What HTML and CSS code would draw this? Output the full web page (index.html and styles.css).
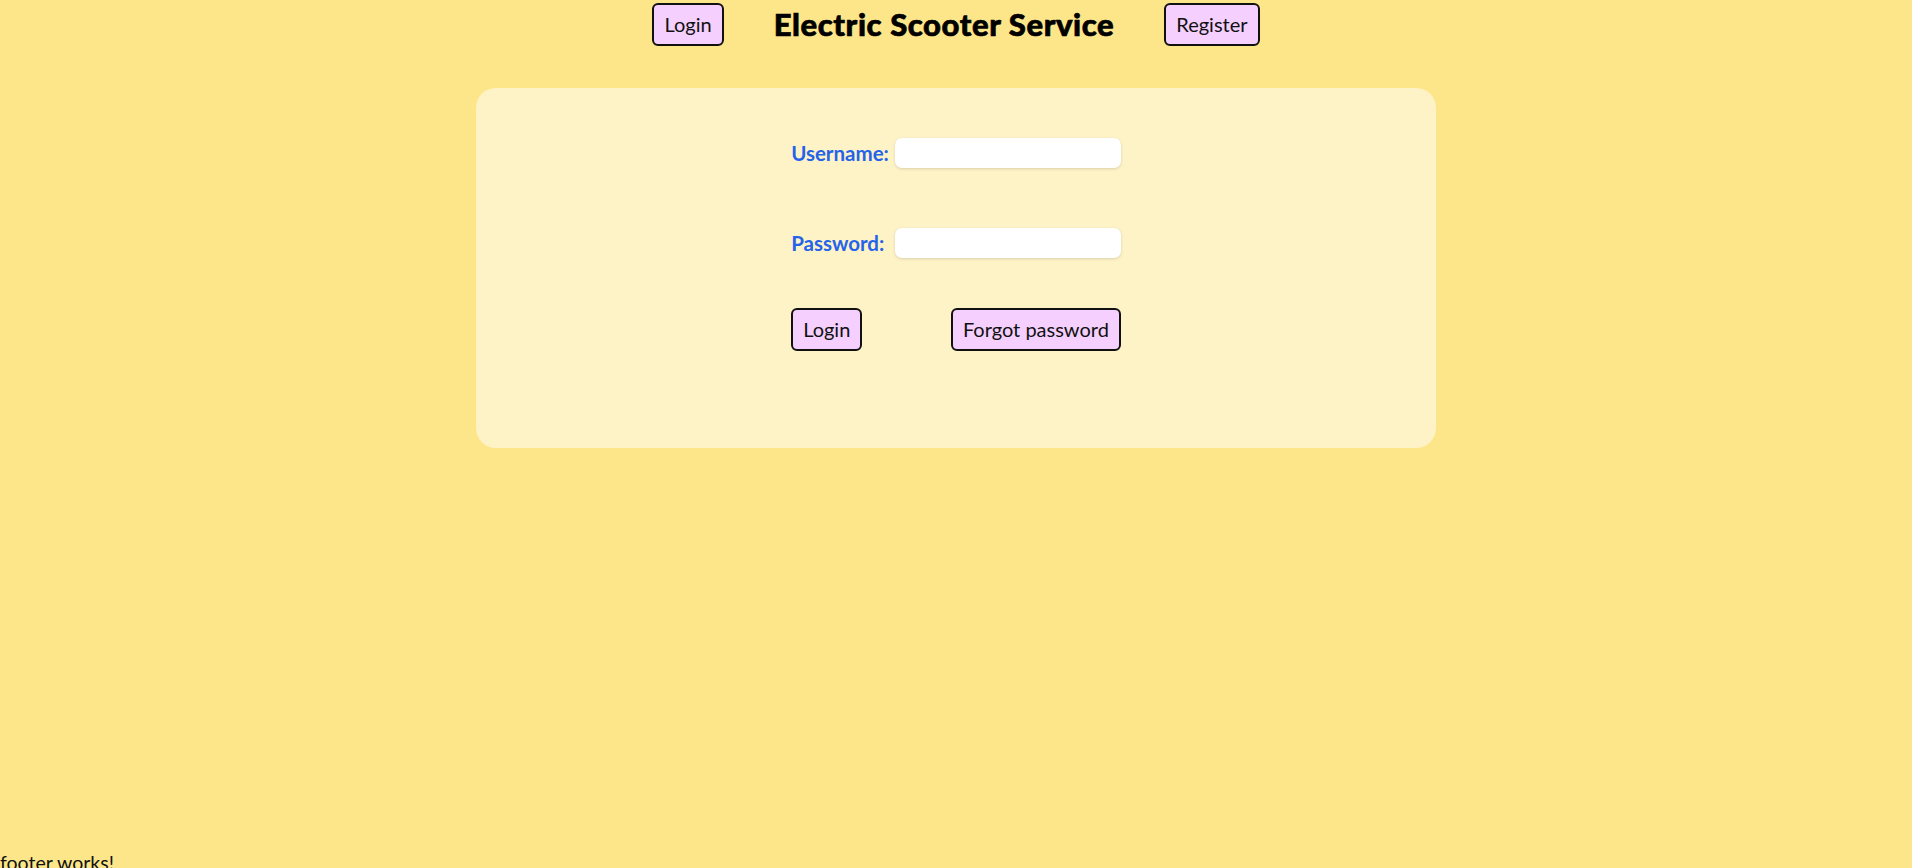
FILE: index.html
```html
<!DOCTYPE html>
<html lang="en">
<head>
<meta charset="utf-8">
<title>Electric Scooter Service</title>
<link rel="stylesheet" href="styles.css">
</head>
<body>
<div class="page">
  <header class="topbar">
    <button class="btn">Login</button>
    <h1 class="title">Electric Scooter Service</h1>
    <button class="btn">Register</button>
  </header>
  <main class="card">
    <form class="login-form">
      <label class="label" for="username">Username:</label>
      <input class="field" id="username" type="text">
      <label class="label" for="password">Password:</label>
      <input class="field" id="password" type="password">
      <div class="actions">
        <button type="button" class="btn">Login</button>
        <button type="button" class="btn">Forgot password</button>
      </div>
    </form>
  </main>
</div>
<footer class="footer">footer works!</footer>
</body>
</html>
```
FILE: styles.css
```css
html, body {
  margin: 0;
  padding: 0;
}
body {
  background: #fde68a;
  font-family: Lato, "Open Sans", sans-serif;
  color: #111;
}
.page {
  min-height: calc(100vh - 17px);
  display: flex;
  flex-direction: column;
  align-items: center;
}
.topbar {
  display: flex;
  align-items: center;
  justify-content: center;
  gap: 50px;
  padding-top: 3px;
}
.title {
  margin: 0;
  font-family: Lato, sans-serif;
  font-weight: 900;
  font-size: 31px;
  letter-spacing: 0.6px;
  line-height: 43px;
  color: #000;
  -webkit-text-stroke: 0.7px #000;
}
.btn {
  font-family: Lato, "Open Sans", sans-serif;
  font-size: 20px;
  line-height: 27px;
  padding: 6px 10px;
  background: #f5d0fe;
  border: 2px solid #111;
  border-radius: 6px;
  color: #111;
  cursor: pointer;
}
.card {
  margin-top: 42px;
  width: 960px;
  box-sizing: border-box;
  background: #fef3c7;
  border-radius: 20px;
  padding: 50px 0 97px;
  display: flex;
  justify-content: center;
}
.login-form {
  display: grid;
  grid-template-columns: auto auto;
  column-gap: 6px;
  row-gap: 60px;
  align-items: center;
}
.label {
  color: #2563eb;
  font-weight: 700;
  font-size: 20.5px;
}
.field {
  width: 226px;
  height: 30px;
  box-sizing: border-box;
  border: none;
  border-radius: 7px;
  background: #fff;
  box-shadow: 0 1px 3px rgba(0, 0, 0, 0.15);
  padding: 0 8px;
  font-size: 16px;
}
.actions {
  grid-column: 1 / -1;
  display: flex;
  justify-content: space-between;
  margin-top: -10px;
}
.footer {
  font-size: 19.5px;
  line-height: 24px;
}
```
